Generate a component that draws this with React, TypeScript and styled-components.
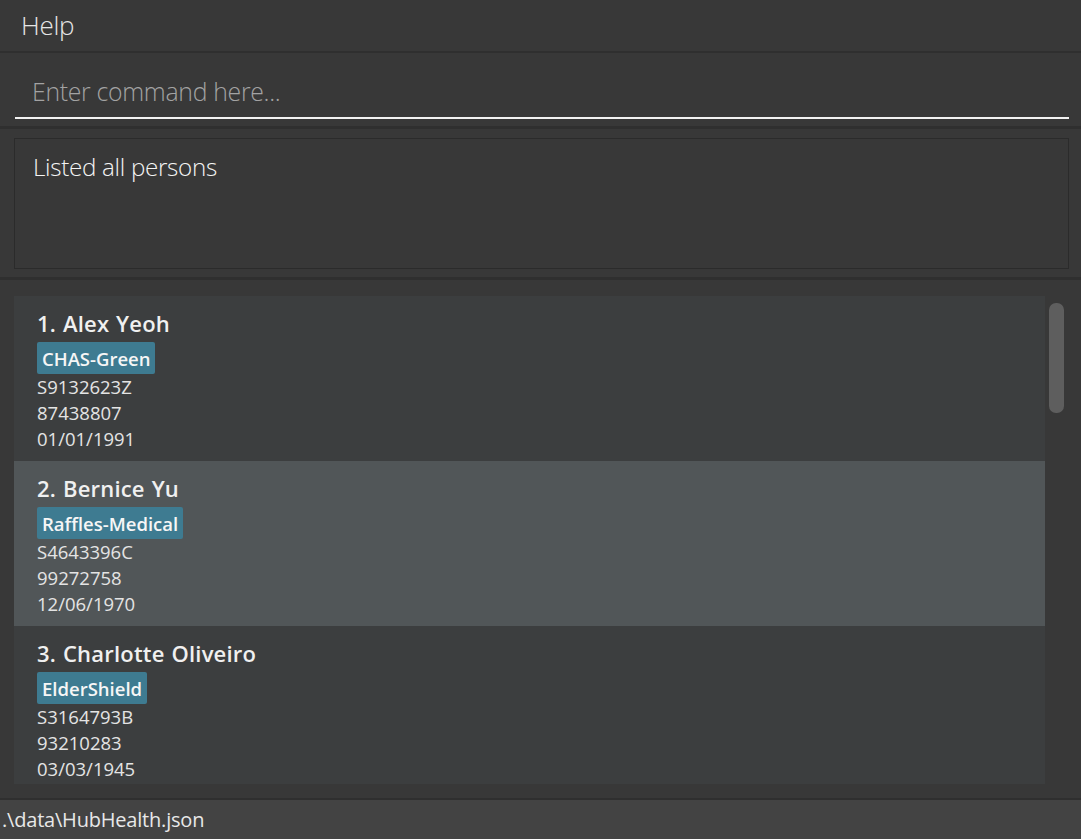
import React from "react";
import styled, { createGlobalStyle } from "styled-components";

const Global = createGlobalStyle`
  html, body { margin: 0; padding: 0; background: #383838; }
  body { font-family: "Open Sans", "Noto Sans", sans-serif; }
  * { box-sizing: border-box; }
`;

const Window = styled.div`
  width: 1081px;
  height: 839px;
  display: flex;
  flex-direction: column;
  background: #383838;
  overflow: hidden;
`;

const MenuBar = styled.div`
  height: 53px;
  display: flex;
  align-items: center;
  padding: 0 0 2px 21px;
  border-bottom: 2px solid #2f2f2f;
  background: #383838;
`;

const MenuItem = styled.span`
  font-size: 26px;
  font-weight: 300;
  color: #e6e6e6;
  letter-spacing: -0.3px;
`;

const CommandSection = styled.div`
  height: 76px;
  padding: 11px 12px 0 15px;
  border-bottom: 3px solid #2f2f2f;
`;

const CommandInput = styled.input`
  width: 100%;
  height: 55px;
  background: transparent;
  border: none;
  border-bottom: 2px solid #f2f2f2;
  outline: none;
  padding: 0 0 0 17px;
  font-family: "Open Sans", "Noto Sans", sans-serif;
  font-size: 24.8px;
  font-weight: 300;
  color: #ffffff;
  letter-spacing: -0.3px;
  &::placeholder { color: #a3a3a3; }
`;

const ResultSection = styled.div`
  height: 151px;
  padding: 9px 12px 8px 14px;
  border-bottom: 3px solid #2f2f2f;
`;

const ResultBox = styled.div`
  height: 131px;
  border: 1px solid #2b2b2b;
  background: #383838;
  padding: 10px 18px;
  font-size: 24.2px;
  font-weight: 300;
  color: #f4f4f4;
  letter-spacing: -0.3px;
  line-height: 36px;
`;

const ListSection = styled.div`
  flex: 1;
  display: flex;
  padding: 16px 0 14px 14px;
  gap: 4px;
  min-height: 0;
`;

const List = styled.div`
  width: 1031px;
  display: flex;
  flex-direction: column;
  overflow: hidden;
`;

const Card = styled.div<{ $odd: boolean }>`
  flex: none;
  height: 165px;
  background: ${(p) => (p.$odd ? "#515658" : "#3c3e3f")};
  padding: 12px 23px 9px;
  display: flex;
  flex-direction: column;
  align-items: flex-start;
`;

const Name = styled.div`
  font-size: 22px;
  font-weight: 600;
  color: #f0f0f0;
  line-height: 30px;
  letter-spacing: 0.2px;
  word-spacing: 1px;
`;

const Tag = styled.span`
  margin-top: 4px;
  height: 33px;
  display: inline-flex;
  align-items: center;
  padding: 0 5px;
  border-radius: 2px;
  background: #3e7b91;
  color: #f6f6f6;
  font-size: 18.5px;
  font-weight: 600;
`;

const Detail = styled.div`
  font-size: 18.5px;
  color: #e4e4e4;
  line-height: 26px;
`;

const ScrollTrack = styled.div`
  width: 15px;
  padding-top: 7px;
`;

const ScrollThumb = styled.div`
  height: 110px;
  border-radius: 7px;
  background: #5e5e5e;
`;

const StatusBar = styled.div`
  height: 41px;
  border-top: 2px solid #2f2f2f;
  background: #434343;
  display: flex;
  align-items: center;
  padding: 0 0 0 2px;
  font-size: 20px;
  color: #e8e8e8;
  letter-spacing: -0.2px;
`;

const persons = [
  { name: "Alex Yeoh", tag: "CHAS-Green", nric: "S9132623Z", phone: "87438807", dob: "01/01/1991" },
  { name: "Bernice Yu", tag: "Raffles-Medical", nric: "S4643396C", phone: "99272758", dob: "12/06/1970" },
  { name: "Charlotte Oliveiro", tag: "ElderShield", nric: "S3164793B", phone: "93210283", dob: "03/03/1945" },
];

export default function App() {
  return (
    <>
      <Global />
      <Window>
        <MenuBar>
          <MenuItem>Help</MenuItem>
        </MenuBar>
        <CommandSection>
          <CommandInput placeholder="Enter command here..." />
        </CommandSection>
        <ResultSection>
          <ResultBox>Listed all persons</ResultBox>
        </ResultSection>
        <ListSection>
          <List>
            {persons.map((p, i) => (
              <Card key={p.name} $odd={i % 2 === 1}>
                <Name>
                  {i + 1}. {p.name}
                </Name>
                <Tag>{p.tag}</Tag>
                <Detail>{p.nric}</Detail>
                <Detail>{p.phone}</Detail>
                <Detail>{p.dob}</Detail>
              </Card>
            ))}
          </List>
          <ScrollTrack>
            <ScrollThumb />
          </ScrollTrack>
        </ListSection>
        <StatusBar>.\data\HubHealth.json</StatusBar>
      </Window>
    </>
  );
}
